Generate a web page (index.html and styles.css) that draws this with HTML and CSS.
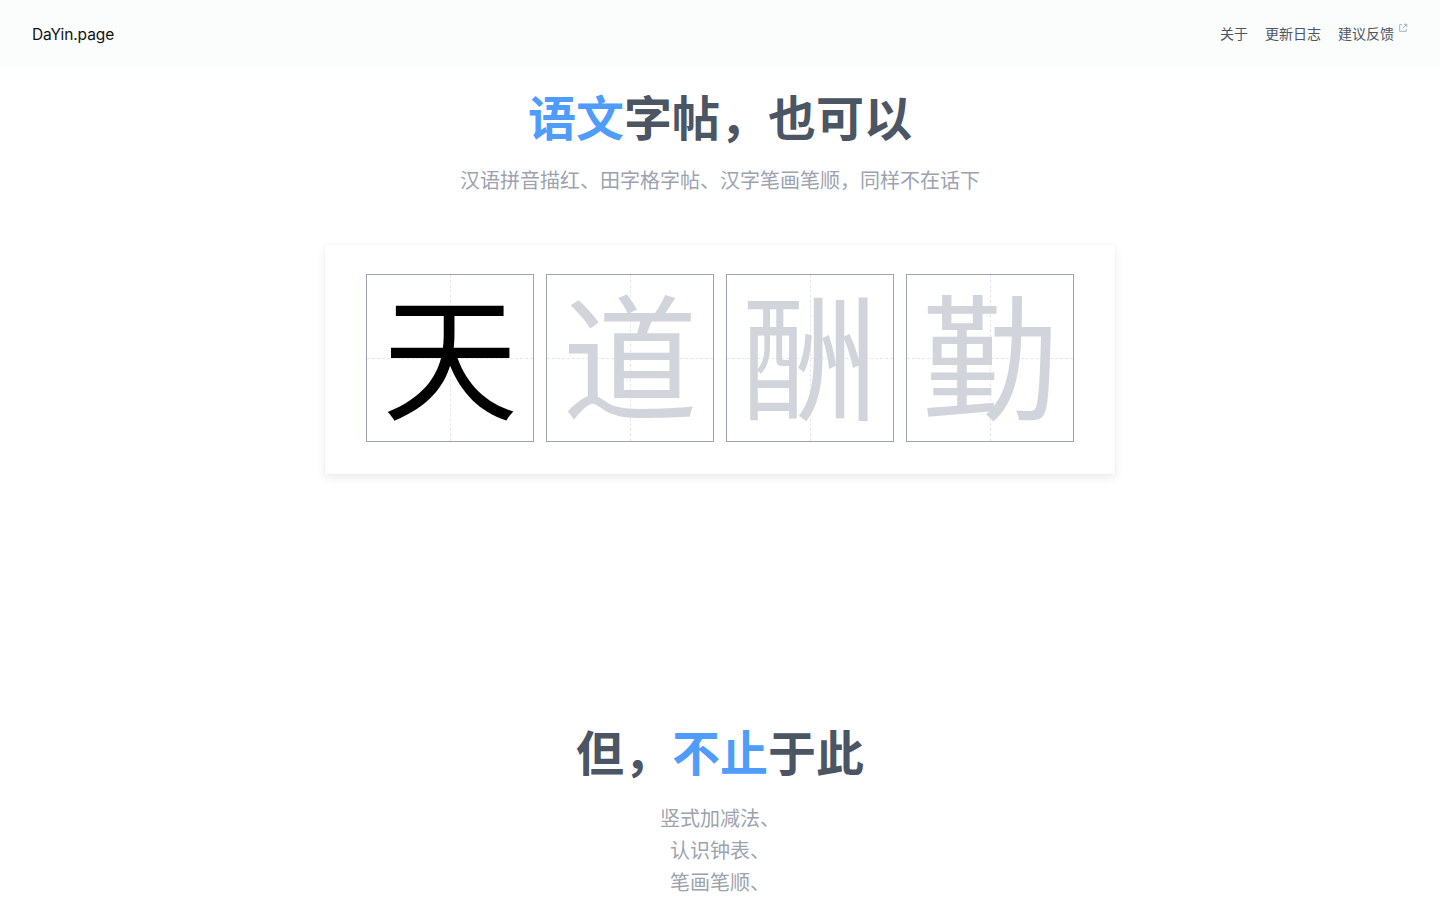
FILE: index.html
```html
<!DOCTYPE html>
<html lang="zh-CN">
<head>
    <meta charset="UTF-8">
    <meta name="viewport" content="width=device-width, initial-scale=1.0">
    <title>DaYin.page</title>
    <link rel="stylesheet" href="styles.css">
</head>
<body>
    <header class="topbar">
        <a class="logo" href="#">DaYin.page</a>
        <nav class="nav">
            <a href="#">关于</a>
            <a href="#">更新日志</a>
            <a href="#" class="ext">建议反馈
                <svg class="ext-icon" viewBox="0 0 12 12" width="10" height="10">
                    <path d="M5 2H2v8h8V7" fill="none" stroke="currentColor" stroke-width="1"/>
                    <path d="M7 1.5h3.5V5M10.5 1.5L5.5 6.5" fill="none" stroke="currentColor" stroke-width="1"/>
                </svg>
            </a>
        </nav>
    </header>

    <section class="hero">
        <h1 class="title"><span class="hl">语文</span>字帖，也可以</h1>
        <p class="sub">汉语拼音描红、田字格字帖、汉字笔画笔顺，同样不在话下</p>

        <div class="card">
            <div class="cell"><span class="char dark">天</span></div>
            <div class="cell"><span class="char">道</span></div>
            <div class="cell"><span class="char">酬</span></div>
            <div class="cell"><span class="char">勤</span></div>
        </div>
    </section>

    <section class="more">
        <h2 class="title">但，<span class="hl">不止</span>于此</h2>
        <p class="list">竖式加减法、<br>认识钟表、<br>笔画笔顺、</p>
    </section>
</body>
</html>
```

FILE: styles.css
```css
body{
    margin:0;
    background:#ffffff;
    font-family: Inter, "Noto Sans CJK SC", sans-serif;
    color:#4b5563;
}

a{
    text-decoration:none;
}

.topbar{
    height:68px;
    display:flex;
    align-items:center;
    justify-content:space-between;
    padding:0 32px;
    background:#fbfcfc;
}

.logo{
    color:#111111;
    font-size:15.5px;
    letter-spacing:-0.1px;
    font-family: Inter, sans-serif;
}

.nav{
    display:flex;
    gap:17px;
    font-size:14px;
    line-height:20px;
    margin-top:-3px;
    font-family:"Noto Sans CJK SC", sans-serif;
}

.nav a{
    color:#4b5563;
}

.ext{
    position:relative;
    padding-right:14px;
}

.ext-icon{
    position:absolute;
    right:0;
    top:0;
    color:#9ca3af;
}

.hero{
    display:flex;
    flex-direction:column;
    align-items:center;
    padding-top:17px;
}

.title{
    margin:0;
    font-size:48px;
    line-height:60px;
    font-weight:700;
    color:#4b5563;
    font-family:"Noto Sans CJK SC", sans-serif;
    text-align:center;
}

.hl{
    color:#4f9cfb;
}

.sub{
    margin:21px 0 0;
    font-size:20px;
    line-height:28px;
    color:#9ca3af;
    font-family:"Noto Sans CJK SC", sans-serif;
}

.card{
    margin-top:51px;
    width:708px;
    padding:29px 41px 32px;
    display:flex;
    gap:12px;
    background:#fff;
    box-shadow:0 4px 10px rgba(0,0,0,0.08), 0 0 3px rgba(0,0,0,0.04);
}

.cell{
    position:relative;
    width:166px;
    height:166px;
    border:1px solid #9ca3af;
    display:flex;
    align-items:center;
    justify-content:center;
    box-sizing:content-box;
    background:#fff;
}

.cell::before,
.cell::after{
    content:"";
    position:absolute;
}

.cell::before{
    left:50%;
    top:0;
    bottom:0;
    border-left:1px dashed #e5e7eb;
}

.cell::after{
    top:50%;
    left:0;
    right:0;
    border-top:1px dashed #e5e7eb;
}

.char{
    position:relative;
    z-index:1;
    font-size:136px;
    line-height:1;
    margin-bottom:14px;
    color:#d1d5db;
    font-family:"Noto Sans CJK SC", serif;
    font-weight:400;
}

.char.dark{
    color:#000;
}

.more{
    margin-top:246px;
    text-align:center;
}

.list{
    margin:22px 0 0;
    font-size:20px;
    line-height:32px;
    color:#9ca3af;
    font-family:"Noto Sans CJK SC", sans-serif;
}
```
